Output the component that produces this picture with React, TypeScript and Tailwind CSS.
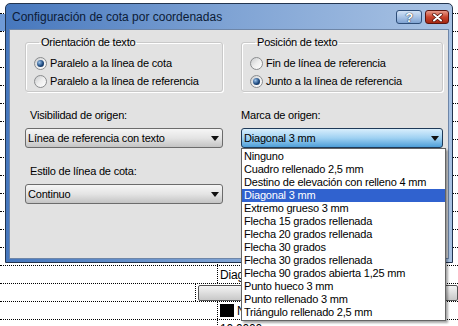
import clsx from "clsx";

const ORIGIN_MARKS = [
  "Ninguno",
  "Cuadro rellenado 2,5 mm",
  "Destino de elevación con relleno 4 mm",
  "Diagonal 3 mm",
  "Extremo grueso 3 mm",
  "Flecha 15 grados rellenada",
  "Flecha 20 grados rellenada",
  "Flecha 30 grados",
  "Flecha 30 grados rellenada",
  "Flecha 90 grados abierta 1,25 mm",
  "Punto hueco 3 mm",
  "Punto rellenado 3 mm",
  "Triángulo rellenado 2,5 mm",
];

function Radio({ label, checked = false }: { label: string; checked?: boolean }) {
  return (
    <div className="flex h-[18px] items-center gap-[3px]">
      <span className="flex h-[13px] w-[13px] shrink-0 items-center justify-center rounded-full border border-[#8a8c8e] bg-gradient-to-br from-[#c9cbcd] via-[#eeeeee] to-[#ffffff]">
        {checked && (
          <span className="h-[7px] w-[7px] rounded-full bg-[radial-gradient(circle_at_35%_35%,#9cc3ea,#1e4a80_55%,#0b1d38)]" />
        )}
      </span>
      <span>{label}</span>
    </div>
  );
}

function Group({ title, children }: { title: string; children: React.ReactNode }) {
  return (
    <fieldset className="rounded-[3px] border border-[#c9c9c9] px-[8px] pt-[5px] pb-[1px] shadow-[inset_1px_1px_0_#ffffff,1px_1px_0_#ffffff]">
      <legend className="ml-[5px] px-[2px] leading-[13px]">{title}</legend>
      {children}
    </fieldset>
  );
}

function Combo({ value, focused = false }: { value: string; focused?: boolean }) {
  return (
    <div
      className={clsx(
        "flex h-[20px] items-center justify-between rounded-[3px] border pr-[3px] pl-[2px]",
        focused
          ? "border-[#1f3a58] bg-gradient-to-b from-[#d8eefc] via-[#9fd1f2] to-[#4d9fd8]"
          : "border-[#6c6c6c] bg-gradient-to-b from-[#f6f6f6] via-[#e4e4e4] to-[#c4c4c4]"
      )}
    >
      <span>{value}</span>
      <svg width="8" height="5" viewBox="0 0 8 5">
        <path d="M0 0H8L4 5Z" fill="#111" />
      </svg>
    </div>
  );
}

function BackgroundGrid() {
  const rows = Array.from({ length: 18 });
  return (
    <div className="flex flex-col">
      <div className="h-[14px] border-b border-dotted border-black" />
      {rows.map((_, i) => (
        <div key={i} className="flex h-[18px] border-b border-dotted border-black">
          <div className={clsx("w-[217px]", i === 0 && "bg-[#6f9ad6]")} />
          <div className="flex flex-1 items-center border-l border-dotted border-black pl-[2px]">
            {i === 14 && <span className="text-[12px]">Diagonal 3 mm</span>}
            {i === 15 && (
              <div className="flex h-[16px] w-[260px] items-center rounded-[2px] border border-[#555] bg-gradient-to-b from-[#f4f4f4] to-[#c8c8c8] pl-[226px] text-[12px]">
                Edit
              </div>
            )}
            {i === 16 && (
              <div className="flex items-center gap-[3px] text-[12px]">
                <span className="h-[13px] w-[14px] bg-black" />
                <span>Negro</span>
              </div>
            )}
            {i === 17 && <span className="text-[12px] leading-[10px]">10.0000</span>}
          </div>
        </div>
      ))}
    </div>
  );
}

function TitleButtons() {
  return (
    <div className="flex gap-[3px] pt-[1px]">
      <div className="flex h-[14px] w-[26px] items-center justify-center rounded-[3px] border border-[#2d4d78] bg-gradient-to-b from-[#d2e2f5] via-[#a9c4e6] to-[#7fa3d2]">
        <span className="text-[13px] leading-[13px] font-bold text-white [text-shadow:0_0_1px_#1d2c44,0_0_1px_#1d2c44]">?</span>
      </div>
      <div className="flex h-[14px] w-[24px] items-center justify-center rounded-[3px] border border-[#5a1410] bg-gradient-to-b from-[#e79a8a] via-[#c9442e] to-[#a62812]">
        <svg width="11" height="9" viewBox="0 0 11 9">
          <path d="M2 1.5L9 7.5M9 1.5L2 7.5" stroke="#4a0e08" strokeWidth="3.4" strokeLinecap="round" />
          <path d="M2 1.5L9 7.5M9 1.5L2 7.5" stroke="#ffffff" strokeWidth="2" strokeLinecap="round" />
        </svg>
      </div>
    </div>
  );
}

export default function App() {
  return (
    <div className="relative h-[326px] w-[458px] overflow-hidden bg-white font-['Liberation_Sans',Arial,sans-serif] text-[11px] tracking-[-0.2px] text-black">
      <BackgroundGrid />

      {/* dialog window */}
      <div className="absolute top-[3px] left-[5px] flex h-[260px] w-[448px] flex-col rounded-t-[5px] border border-[#23354f] bg-gradient-to-r from-[#4677bd] via-[#7fa3d4] to-[#a9c3e4] px-[3px] pb-[3px]">
        <div className="flex h-[25px] items-center justify-between pr-[0px] pl-[3px]">
          <span className="text-[12px] tracking-normal text-[#0c1b36]">Configuración de cota por coordenadas</span>
          <TitleButtons />
        </div>

        <div className="flex-1 border border-[#6e86a8] bg-[#e2e2e2] pt-[6px] pl-[15px]">
          <div className="grid grid-cols-[198px_202px] gap-x-[18px]">
            {/* left column */}
            <div className="flex flex-col">
              <Group title="Orientación de texto">
                <Radio label="Paralelo a la línea de cota" checked />
                <Radio label="Paralelo a la línea de referencia" />
              </Group>
              <span className="mt-[17px] ml-[5px] leading-[13px]">Visibilidad de origen:</span>
              <div className="mt-[6px]">
                <Combo value="Línea de referencia con texto" />
              </div>
              <span className="mt-[17px] ml-[5px] leading-[13px]">Estilo de línea de cota:</span>
              <div className="mt-[6px]">
                <Combo value="Continuo" />
              </div>
            </div>

            {/* right column */}
            <div className="flex flex-col">
              <Group title="Posición de texto">
                <Radio label="Fin de línea de referencia" />
                <Radio label="Junto a la línea de referencia" checked />
              </Group>
              <span className="mt-[17px] leading-[13px]">Marca de origen:</span>
              <div className="relative mt-[6px]">
                <Combo value="Diagonal 3 mm" focused />
                {/* open list */}
                <div className="absolute top-full left-0 z-10 w-[205px] border border-[#646464] bg-white py-[1px] shadow-[2px_2px_2px_rgba(0,0,0,0.35)]">
                  {ORIGIN_MARKS.map((m) => (
                    <div
                      key={m}
                      className={clsx(
                        "h-[13px] pl-[2px] leading-[13px] whitespace-nowrap",
                        m === "Diagonal 3 mm" && "bg-[#3062cf] text-white"
                      )}
                    >
                      {m}
                    </div>
                  ))}
                </div>
              </div>
            </div>
          </div>
        </div>
      </div>
    </div>
  );
}
